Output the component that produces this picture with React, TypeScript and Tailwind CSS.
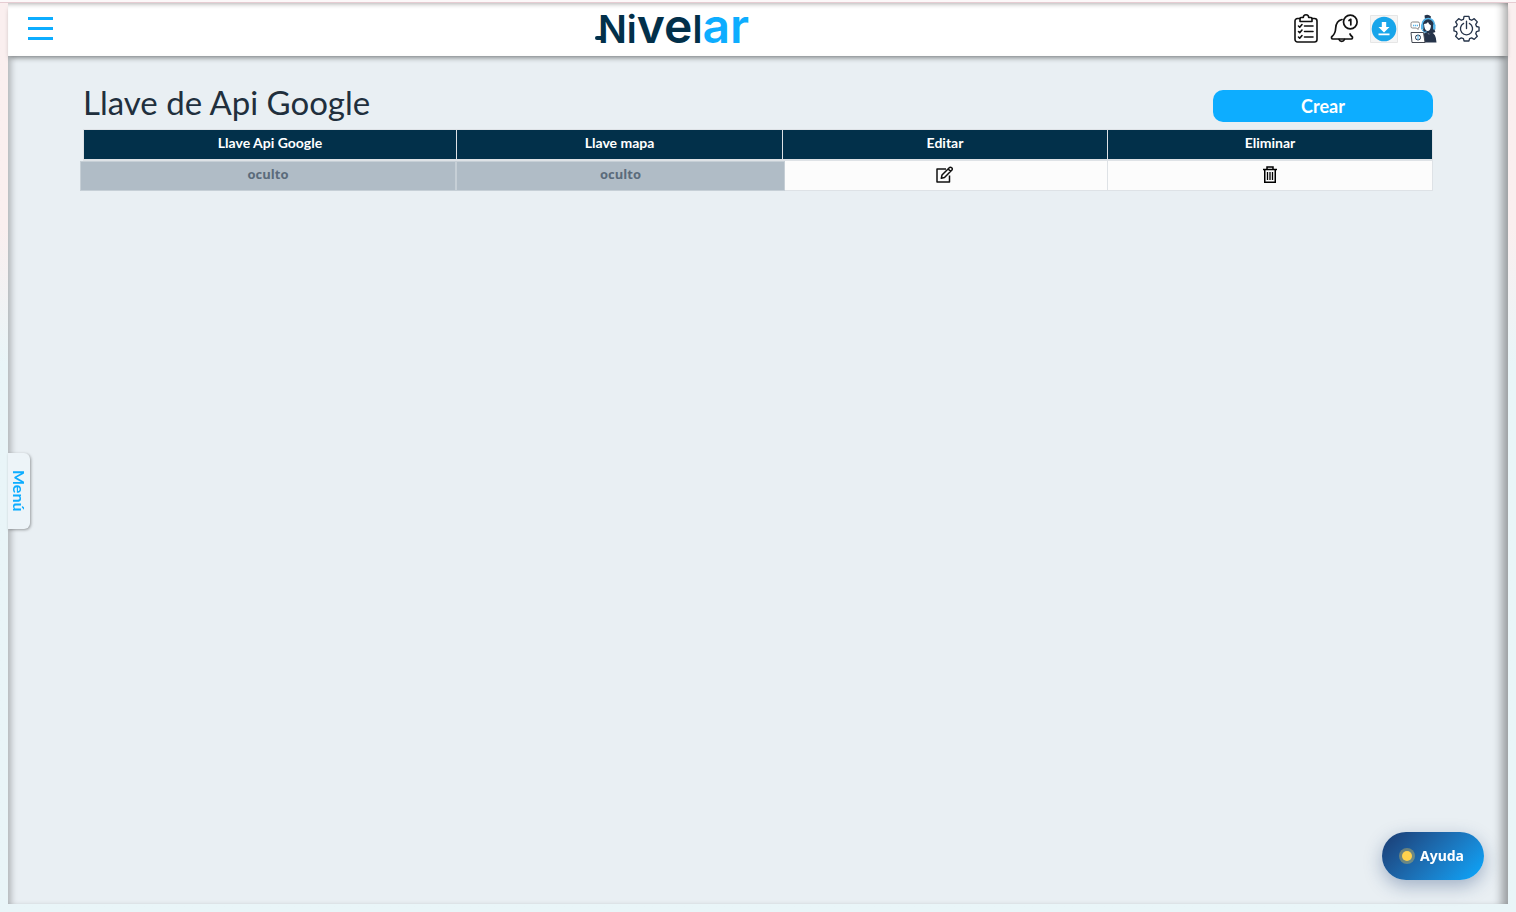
import type { ReactNode } from "react";

const columns = [
  { label: "Llave Api Google", width: "w-[373px]" },
  { label: "Llave mapa", width: "w-[326px]" },
  { label: "Editar", width: "w-[325px]" },
  { label: "Eliminar", width: "w-[325px]" },
];

function Logo() {
  return (
    <svg
      width="152"
      height="50"
      viewBox="0 0 152 50"
      role="img"
      aria-label="Nivelar"
      className="overflow-visible font-['Inter',sans-serif] font-semibold"
    >
      <rect x="0" y="32" width="10" height="4" rx="2" fill="#02304a" />
      <text x="3" y="39" fill="#02304a">
        <tspan fontSize="38">Ni</tspan>
        <tspan fontSize="48">ve</tspan>
        <tspan fontSize="38">l</tspan>
        <tspan fontSize="48" fill="#0dadff">ar</tspan>
      </text>
    </svg>
  );
}

function ClipboardIcon() {
  return (
    <svg width="24" height="30" viewBox="0 0 24 30" fill="none" stroke="#111" strokeWidth="1.6" strokeLinecap="round" strokeLinejoin="round">
      <path d="M6 4.500H3.500a2.500 2.500 0 0 0-2.500 2.500v18.500a2.500 2.500 0 0 0 2.500 2.500h17a2.500 2.500 0 0 0 2.500-2.500V7a2.500 2.500 0 0 0-2.500-2.500H18" />
      <path d="M6 7.500V4.500q0-1 1-1h2.300a2.700 2.700 0 0 1 5.400 0H17q1 0 1 1v3z" />
      <path d="M10.500 12H19M10.500 17.500H19M10.500 23H19" />
      <path d="m4.500 12 1.200 1.200 2.300-2.700M4.500 17.500l1.200 1.200L8 16M4.500 23l1.200 1.200L8 21.500" />
    </svg>
  );
}

function BellIcon() {
  return (
    <svg width="28" height="30" viewBox="0 0 28 30" fill="none" stroke="#111" strokeWidth="1.700" strokeLinecap="round" strokeLinejoin="round">
      <path d="M12 5.500C7.500 6.500 6 9.500 5.700 14c-.2 4-1.200 6.500-3.700 8.500-1 .8-.5 2.500.7 2.500h18.600c1.200 0 1.700-1.700.7-2.500-.8-.7-1.500-1.500-2-2.500" />
      <path d="M9 25.500a3 3 0 0 0 5.500 0" />
      <circle cx="20.300" cy="8" r="6.800" />
      <path d="m19 6.500 1.800-1.200v5.500" />
    </svg>
  );
}

function DownloadIcon() {
  return (
    <svg width="28" height="28" viewBox="0 0 28 28">
      <path d="M.5.5h27v27H.5z" fill="#f5f5f5" stroke="#e6e6e6" />
      <circle cx="14" cy="14" r="12.300" fill="#18a5ea" />
      <path d="M11.800 7h4.400v5h3.300L14 17.500 8.500 12h3.300zM8.500 18.500h11v1.700h-11z" fill="#fff" />
    </svg>
  );
}

function SupportIcon() {
  return (
    <svg width="27" height="30" viewBox="0 0 27 30" fill="none">
      <path d="M12 11c0-4 2.500-6.500 6-6.500s6.500 2.500 6.500 6.500c0 3 0 6 1 7l-6 2-6-2z" fill="#26344a" />
      <path d="M14.500 1.500Q18-.5 21 2.500l-1 4-5-1z" fill="#26344a" />
      <path d="M14 10q3 0 4-2 1 3 3 3.500Q20.500 17 17.500 17T14 10z" fill="#fff" />
      <path d="M12 12c-.5-10 13-10 12.500 0" stroke="#55b5ea" strokeWidth="1.500" />
      <path d="M11 10.500h2.500v5H11zM23 10.500h2.500v5H23z" fill="#55b5ea" />
      <path d="M12 16q2 3 5 2" stroke="#55b5ea" />
      <path d="M13.500 19.500 17 18.500l2 2 2-2q5 .5 5.500 10h-12z" fill="#26344a" />
      <path d="M1 18.500h12.500l1.500 10H2z" fill="#fff" stroke="#454a54" />
      <circle cx="8" cy="23.500" r="2.500" stroke="#26344a" />
      <path d="M8 21v5" stroke="#55b5ea" />
      <path d="M2.500 8H8q1.500 0 1.500 1.500v3Q9.500 14 8 14v1.500L6.500 14h-4Q1 14 1 12.500v-3Q1 8 2.500 8z" stroke="#888" />
      <path d="M3 11.500h5" stroke="#55b5ea" strokeWidth="1.500" strokeDasharray="1.300 .7" />
    </svg>
  );
}

function PowerIcon() {
  return (
    <svg width="27" height="27" viewBox="0 0 28 28" fill="none" stroke="#26344a" strokeWidth="1.400" strokeLinejoin="round" strokeLinecap="round">
      <path d="M11.500 1.500h5l.7 3 2.200.9 2.600-1.600 3.200 3.300-1.600 2.700.8 2.100 2.600.6v4l-2.600.7-.8 2.200 1.600 2.700-3.200 3.200-2.700-1.600-2.100.8-.7 2.500h-5l-.7-2.500-2.200-.8-2.700 1.600-3.200-3.200 1.600-2.700-.8-2.200L1 16.500v-4l2.500-.6.8-2.100-1.600-2.700L5.900 3.800l2.700 1.600 2.200-.9z" />
      <path d="M11 8.700a6.300 6.300 0 1 0 6 0M14 6.500V14" />
    </svg>
  );
}

function EditIcon() {
  return (
    <svg width="18" height="18" viewBox="0 0 18 18" fill="none" stroke="#111" strokeWidth="1.500" strokeLinejoin="round">
      <path d="M10 3H1v13h12.500V9.500" />
      <path d="m6 9 7.300-7.300q1.200-1 2.400.1t0 2.500L8.500 11.500l-3.200.8zM12.200 3l2.400 2.400" />
    </svg>
  );
}

function TrashIcon() {
  return (
    <svg width="14" height="18" viewBox="0 0 14 18" fill="none" stroke="#000" strokeWidth="1.500">
      <path d="M0 3.500h14M4 3V1h6v2M1.750 4v12.250h10.500V4" />
      <path d="M4.500 6v8M7 6v8M9.500 6v8" strokeWidth="1.300" />
    </svg>
  );
}

function IconButton({ label, children }: { label: string; children: ReactNode }) {
  return (
    <button type="button" aria-label={label} className="flex cursor-pointer items-center justify-center">
      {children}
    </button>
  );
}

// the cover reaches slightly past the cell borders
function HiddenCell({ cover }: { cover: string }) {
  return (
    <td className="relative h-[31px] border border-[#dee2e6]">
      <div
        className={`${cover} absolute top-0 -bottom-px flex items-center justify-center border border-[#c6cfd6] bg-[#b0bcc6] pb-0.5 font-['Open_Sans',sans-serif] text-[13px] font-bold text-[#5b6b7b]`}
      >
        oculto
      </div>
    </td>
  );
}

export default function App() {
  return (
    <div className="flex min-h-screen flex-col bg-linear-to-b from-[#faefef] from-25% to-[#e9f5f8] to-40% px-2 pb-2 font-['Lato',sans-serif]">
      <div className="-mx-2 h-[3px] border-b border-[#e6ccd2] bg-[#fcf8f9]" />

      <header className="z-10 grid h-[53px] grid-cols-[1fr_auto_1fr] items-center bg-white pb-0.5 pl-5 pr-7 shadow-[0_4px_5px_-2px_rgba(0,0,0,0.4),inset_0_5px_5px_-4px_rgba(0,0,0,0.3),inset_-12px_0_10px_-8px_rgba(0,0,0,0.35)]">
        <button type="button" aria-label="Abrir menú" className="flex w-[25px] cursor-pointer flex-col gap-[7px]">
          <span className="h-[3px] bg-[#0dadff]" />
          <span className="h-[3px] bg-[#0dadff]" />
          <span className="h-[3px] bg-[#0dadff]" />
        </button>
        {/* the logo sits left of the centre of the bar */}
        <div className="mr-[166px]">
          <Logo />
        </div>
        <nav className="flex items-center justify-end gap-3">
          <IconButton label="Tareas"><ClipboardIcon /></IconButton>
          <IconButton label="Notificaciones"><BellIcon /></IconButton>
          <IconButton label="Descargar"><DownloadIcon /></IconButton>
          <IconButton label="Soporte"><SupportIcon /></IconButton>
          <div className="pl-1">
            <IconButton label="Salir"><PowerIcon /></IconButton>
          </div>
        </nav>
      </header>

      <main className="relative flex-1 bg-[#e9eff3] px-[5%] pt-[30px] shadow-[inset_7px_0_6px_-4px_rgba(0,0,0,0.25),inset_-12px_0_10px_-6px_rgba(0,0,0,0.35)]">
        <div className="flex items-center justify-between pb-[7px]">
          <h1 className="pb-1 text-[33px] leading-8 text-[#212f3d]">Llave de Api Google</h1>
          <button type="button" className="mt-1 h-8 w-[220px] cursor-pointer rounded-[10px] bg-[#0dadff] text-lg font-bold text-white">
            Crear
          </button>
        </div>

        <table className="w-full table-fixed border-collapse text-center">
          <thead>
            <tr>
              {columns.map((column) => (
                <th
                  key={column.label}
                  scope="col"
                  className={`${column.width} h-[30px] border border-b-2 border-[#dee2e6] bg-[#02304a] pb-0.5 text-sm font-bold text-white`}
                >
                  {column.label}
                </th>
              ))}
            </tr>
          </thead>
          <tbody>
            <tr className="bg-[#fcfcfc]">
              <HiddenCell cover="-left-1 right-0" />
              <HiddenCell cover="-left-px -right-[3px]" />
              <td className="border border-[#dee2e6]">
                <div className="flex justify-center">
                  <IconButton label="Editar"><EditIcon /></IconButton>
                </div>
              </td>
              <td className="border border-[#dee2e6]">
                <div className="flex justify-center">
                  <IconButton label="Eliminar"><TrashIcon /></IconButton>
                </div>
              </td>
            </tr>
          </tbody>
        </table>
      </main>

      <button
        type="button"
        className="fixed left-2 top-[453px] z-20 flex h-[76px] w-[22px] cursor-pointer items-center justify-center rounded-r-md bg-[#edf4f8] text-base font-bold text-[#0dadff] shadow-[1px_1px_3px_rgba(0,0,0,0.35)] [writing-mode:vertical-rl]"
      >
        Menú
      </button>

      <button
        type="button"
        className="fixed bottom-8 right-8 z-20 flex h-12 cursor-pointer items-center gap-2 rounded-full bg-linear-135 from-[#1a3c72] to-[#03a9ff] px-5 font-['Noto_Sans',sans-serif] text-sm font-bold text-white shadow-[0_6px_18px_rgba(26,60,114,0.35)]"
      >
        <span className="size-[10px] rounded-full bg-[#ffd24d] shadow-[0_0_0_3px_rgba(255,210,77,0.35)]" />
        Ayuda
      </button>
    </div>
  );
}
